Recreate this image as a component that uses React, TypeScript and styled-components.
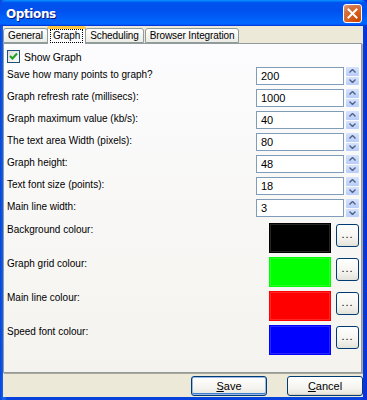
import React, { useState } from 'react';
import styled, { createGlobalStyle } from 'styled-components';

const GlobalStyle = createGlobalStyle`
  html, body {
    margin: 0;
    padding: 0;
    background: #ffffff;
  }
  body {
    font-family: "Liberation Sans", Arial, sans-serif;
    font-size: 10px;
    letter-spacing: -0.1px;
    color: #000;
  }
`;

type NumField = { label: string; value: string };

const numberFields: NumField[] = [
  { label: 'Save how many points to graph?', value: '200' },
  { label: 'Graph refresh rate (millisecs):', value: '1000' },
  { label: 'Graph maximum value (kb/s):', value: '40' },
  { label: 'The text area Width (pixels):', value: '80' },
  { label: 'Graph height:', value: '48' },
  { label: 'Text font size (points):', value: '18' },
  { label: 'Main line width:', value: '3' },
];

const colourFields = [
  { label: 'Background colour:', colour: '#000000' },
  { label: 'Graph grid colour:', colour: '#00ff00' },
  { label: 'Main line colour:', colour: '#ff0000' },
  { label: 'Speed font colour:', colour: '#0000ff' },
];

const tabs = ['General', 'Graph', 'Scheduling', 'Browser Integration'];

const App: React.FC = () => {
  const [showGraph, setShowGraph] = useState(true);
  const [activeTab, setActiveTab] = useState('Graph');

  return (
    <>
      <GlobalStyle />
      <Window>
        <TitleBar>
          <Title>Options</Title>
          <CloseButton aria-label="Close">
            <svg width="11" height="11" viewBox="0 0 11 11">
              <path d="M1.5 1.5 L9.5 9.5 M9.5 1.5 L1.5 9.5" stroke="#fff" strokeWidth="2" strokeLinecap="square" />
            </svg>
          </CloseButton>
        </TitleBar>
        <Client>
          <TabStrip>
            {tabs.map(t => (
              <Tab key={t} $active={t === activeTab} onClick={() => setActiveTab(t)}>
                <TabLabel $active={t === activeTab}>{t}</TabLabel>
              </Tab>
            ))}
          </TabStrip>
          <Panel>
            <CheckRow>
              <CheckBox onClick={() => setShowGraph(!showGraph)}>
                {showGraph && (
                  <svg width="9" height="9" viewBox="0 0 9 9">
                    <path d="M1 4 L3.5 6.5 L8 1.5" stroke="#21a121" strokeWidth="2" fill="none" />
                  </svg>
                )}
              </CheckBox>
              <span>Show Graph</span>
            </CheckRow>
            <FieldGrid>
              {numberFields.map(f => (
                <React.Fragment key={f.label}>
                  <FieldLabel>{f.label}</FieldLabel>
                  <SpinBox>
                    <NumberInput defaultValue={f.value} />
                    <SpinButtons>
                      <SpinHalf>
                        <svg width="7" height="4" viewBox="0 0 7 4">
                          <path d="M0.5 3.5 L3.5 0.5 L6.5 3.5" stroke="#4d6185" strokeWidth="1.4" fill="none" />
                        </svg>
                      </SpinHalf>
                      <SpinHalf>
                        <svg width="7" height="4" viewBox="0 0 7 4">
                          <path d="M0.5 0.5 L3.5 3.5 L6.5 0.5" stroke="#4d6185" strokeWidth="1.4" fill="none" />
                        </svg>
                      </SpinHalf>
                    </SpinButtons>
                  </SpinBox>
                </React.Fragment>
              ))}
            </FieldGrid>
            <ColourGrid>
              {colourFields.map(c => (
                <React.Fragment key={c.label}>
                  <ColourLabel>{c.label}</ColourLabel>
                  <ColourPick>
                    <Swatch $colour={c.colour} />
                    <DotsButton>...</DotsButton>
                  </ColourPick>
                </React.Fragment>
              ))}
            </ColourGrid>
          </Panel>
          <Footer>
            <PushButton $default>
              <u>S</u>ave
            </PushButton>
            <PushButton>
              <u>C</u>ancel
            </PushButton>
          </Footer>
        </Client>
      </Window>
    </>
  );
};

export default App;

// Styled components
const Window = styled.div`
  width: 367px;
  height: 400px;
  display: flex;
  flex-direction: column;
  box-sizing: border-box;
  background: linear-gradient(to right, #0842dc 0%, #166aee 1%, #0842dc 2%, #0842dc 98%, #0831d9 100%);
  overflow: hidden;
`;

const TitleBar = styled.div`
  height: 26px;
  flex-shrink: 0;
  display: flex;
  align-items: center;
  justify-content: space-between;
  padding: 0 5px 0 6px;
  background: linear-gradient(
    to bottom,
    #0997ff 0%,
    #0053ee 10%,
    #0050ee 40%,
    #0066ff 85%,
    #0066ff 90%,
    #005bff 94%,
    #003dd7 97%,
    #003dd7 100%
  );
  border-radius: 6px 6px 0 0;
`;

const Title = styled.div`
  color: #fff;
  font-family: "DejaVu Sans", "Liberation Sans", sans-serif;
  font-weight: bold;
  font-size: 12px;
  letter-spacing: -0.4px;
  text-shadow: 1px 1px 0 #0a1883;
  padding-top: 1px;
`;

const CloseButton = styled.div`
  width: 19px;
  height: 19px;
  box-sizing: border-box;
  border: 1px solid #fff;
  border-radius: 3px;
  display: flex;
  align-items: center;
  justify-content: center;
  background: radial-gradient(circle at 80% 90%, #cc4600 0%, #dc6527 55%, #cd7546 70%, #e9a080 100%);
  margin-top: 1px;
`;

const Client = styled.div`
  flex: 1;
  display: flex;
  flex-direction: column;
  margin: 0 4px 3px 3px;
  background: #ece9d8;
  padding-top: 1px;
`;

const TabStrip = styled.div`
  display: flex;
  align-items: flex-end;
  height: 16px;
  position: relative;
  z-index: 1;
`;

const Tab = styled.div<{ $active?: boolean }>`
  box-sizing: border-box;
  height: ${p => (p.$active ? '18px' : '15px')};
  margin: ${p => (p.$active ? '0 -1px -1px -2px' : '0 1px 0 0')};
  padding: ${p => (p.$active ? '1px 3px 0' : '0 3px')};
  display: flex;
  align-items: center;
  border: 1px solid #919b9c;
  border-bottom: ${p => (p.$active ? 'none' : '1px solid #919b9c')};
  border-top: ${p => (p.$active ? '3px solid #ffc83c' : '1px solid #919b9c')};
  border-radius: 3px 3px 0 0;
  background: ${p => (p.$active ? '#fcfcfe' : 'linear-gradient(to bottom, #fff 0%, #f3f3ef 60%, #ecebe6 100%)')};
  cursor: default;
  white-space: nowrap;
  position: relative;
  z-index: ${p => (p.$active ? 2 : 1)};
  &:last-child {
    margin-right: 0;
  }
`;

const TabLabel = styled.span<{ $active?: boolean }>`
  outline: ${p => (p.$active ? '1px dotted #000' : 'none')};
  padding: 0 ${p => (p.$active ? '2px' : '1px')};
  line-height: 12px;
  margin-top: ${p => (p.$active ? '-2px' : '0')};
`;

const Panel = styled.div`
  flex: 1;
  box-sizing: border-box;
  border: 1px solid #919b9c;
  box-shadow: 1px 1px 0 #aca899;
  background: linear-gradient(to bottom, #fcfcfe 0%, #f4f3ee 100%);
  padding: 5px 2px 0 2px;
  margin-right: 1px;
`;

const CheckRow = styled.label`
  display: flex;
  align-items: center;
  gap: 4px;
  height: 15px;
  padding-left: 1px;
  font-size: 10.5px;
  letter-spacing: -0.1px;
`;

const CheckBox = styled.span`
  width: 13px;
  height: 13px;
  box-sizing: border-box;
  border: 1px solid #1c5180;
  background: linear-gradient(135deg, #dcdcd7 0%, #fff 100%);
  display: flex;
  align-items: center;
  justify-content: center;
`;

const FieldGrid = styled.div`
  display: grid;
  grid-template-columns: 1fr auto;
  align-items: center;
  row-gap: 4px;
  margin-top: 3px;
  font-size: 10px;
  letter-spacing: 0;
`;

const FieldLabel = styled.div`
  padding-left: 1px;
  margin-top: -3px;
`;

const SpinBox = styled.div`
  display: flex;
  gap: 2px;
  align-items: stretch;
`;

const NumberInput = styled.input`
  width: 88px;
  height: 18px;
  box-sizing: border-box;
  border: 1px solid #7f9db9;
  padding: 0 4px;
  font: inherit;
  font-size: 11px;
  background: #fff;
  &:focus {
    outline: none;
  }
`;

const SpinButtons = styled.div`
  width: 13px;
  display: flex;
  flex-direction: column;
  gap: 1px;
`;

const SpinHalf = styled.div`
  flex: 1;
  background: linear-gradient(to bottom, #d6e2fd 0%, #b9cdf9 100%);
  border-radius: 1px;
  display: flex;
  align-items: center;
  justify-content: center;
`;

const ColourGrid = styled.div`
  display: grid;
  grid-template-columns: 1fr auto;
  align-items: start;
  row-gap: 4px;
  margin-top: 6px;
  font-size: 10px;
  letter-spacing: 0;
`;

const ColourLabel = styled.div`
  padding-left: 1px;
  padding-top: 1px;
`;

const ColourPick = styled.div`
  display: flex;
  gap: 5px;
  align-items: flex-start;
`;

const Swatch = styled.div<{ $colour: string }>`
  width: 62px;
  height: 30px;
  box-sizing: border-box;
  background: ${p => p.$colour};
  border: 1px solid ${p => p.$colour};
  box-shadow: inset 0 0 0 1px rgba(255, 255, 255, 0.15);
`;

const DotsButton = styled.button`
  width: 23px;
  height: 23px;
  margin-top: 1px;
  box-sizing: border-box;
  border: 1px solid #003c74;
  border-radius: 3px;
  background: linear-gradient(to bottom, #fff 0%, #f5f4ef 60%, #e3e2da 100%);
  font: inherit;
  font-size: 11px;
  padding: 0 0 3px;
  line-height: 1;
  color: #000;
  letter-spacing: 1px;
`;

const Footer = styled.div`
  height: 24px;
  display: flex;
  justify-content: flex-end;
  align-items: flex-start;
  gap: 20px;
  padding-top: 3px;
  box-sizing: border-box;
`;

const PushButton = styled.button<{ $default?: boolean }>`
  width: 76px;
  height: 20px;
  box-sizing: border-box;
  border: 1px solid #003c74;
  border-radius: 3px;
  background: linear-gradient(to bottom, #fff 0%, #f5f4ef 60%, #e3e2da 100%);
  box-shadow: ${p => (p.$default ? 'inset 0 0 0 1px #98b8ea, inset 0 -1px 0 1px #3d7bd1' : 'inset 0 -1px 0 #d6d0c5')};
  font: inherit;
  font-size: 11px;
  color: #000;
  padding: 0;
  u {
    text-decoration: underline;
  }
`;
